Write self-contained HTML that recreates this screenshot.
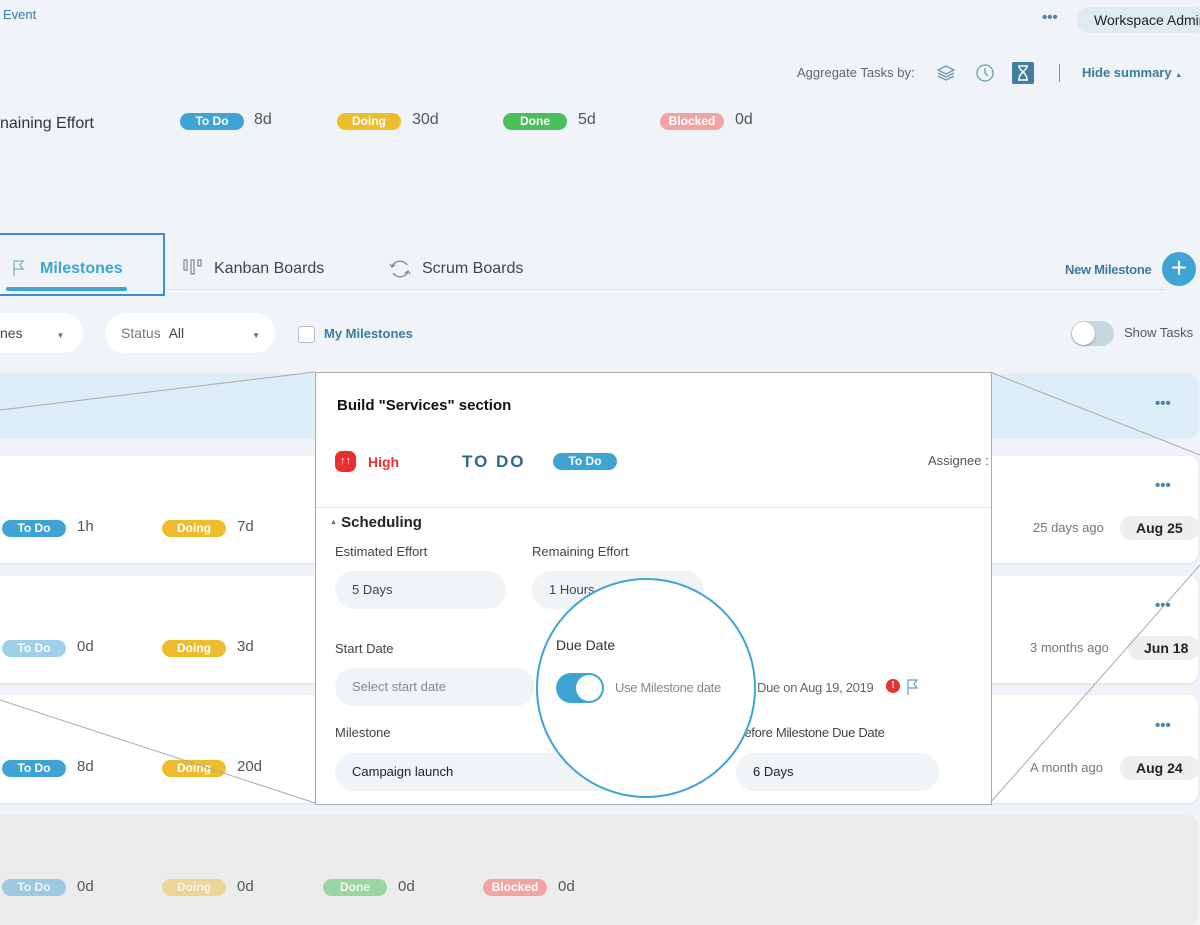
<!DOCTYPE html>
<html><head><meta charset="utf-8"><style>
*{margin:0;padding:0;box-sizing:border-box}
body{width:1200px;height:919px;overflow:hidden;background:#f0f4f8;font-family:"Liberation Sans",sans-serif;color:#333;position:relative}
.a{position:absolute;white-space:nowrap}
.b{position:absolute;height:17px;width:64px;border-radius:9px;color:#fff;font-weight:bold;font-size:12px;text-align:center;line-height:17px}
.todo{background:#3fa3d4}.doing{background:#eebd2e}.done{background:#4cbf5d}.blk{background:#f2a3a3}
.v{position:absolute;font-size:15px;color:#555}
.card{position:absolute;left:0;width:1198px;background:#fff;border-radius:0 10px 10px 0;box-shadow:0 1px 3px rgba(0,0,0,.08)}
.dots{position:absolute;color:#4a86a8;font-size:15px;font-weight:bold;letter-spacing:0px}
.pill{position:absolute;background:#eceeef;border-radius:14px;height:24px;font-weight:bold;font-size:14px;line-height:24px;padding-left:16px;color:#222}
.inp{position:absolute;background:#f1f4f6;border-radius:19px;height:38px;font-size:13px;line-height:38px;padding-left:17px;color:#444}
.lbl{position:absolute;font-size:13px;color:#444}
</style></head><body>
<div class="a" style="left:3px;top:7px;font-size:13px;color:#3a7ca0">Event</div>
<div class="a" style="left:1042px;top:9px;font-size:15px;color:#4a86a8;font-weight:bold">•••</div>
<div class="a" style="left:1077px;top:7px;width:130px;height:26px;background:#dfeaf1;border-radius:13px;font-size:14px;line-height:26px;padding-left:17px;color:#222">Workspace Admin</div>
<div class="a" style="left:797px;top:65px;font-size:13px;color:#666">Aggregate Tasks by:</div>
<svg class="a" style="left:936px;top:63px" width="20" height="20" viewBox="0 0 20 20" fill="none" stroke="#6a9cb0" stroke-width="1.3"><path d="M10 3 2 7l8 4 8-4z"/><path d="M2 10l8 4 8-4"/><path d="M2 13l8 4 8-4"/></svg>
<svg class="a" style="left:975px;top:63px" width="20" height="20" viewBox="0 0 20 20" fill="none" stroke="#6a9cb0" stroke-width="1.3"><circle cx="10" cy="10" r="8"/><path d="M10 5v5l3 3"/></svg>
<svg class="a" style="left:1012px;top:62px" width="22" height="22" viewBox="0 0 22 22"><rect width="22" height="22" rx="2" fill="#3f7e9c"/><path d="M6 4h10M6 18h10M7 4c0 5 8 6 8 14M15 4c0 5-8 6-8 14" stroke="#fff" stroke-width="1.5" fill="none"/></svg>
<div class="a" style="left:1059px;top:64px;width:1px;height:18px;background:#6a9cb0"></div>
<div class="a" style="left:1082px;top:65px;font-size:13px;color:#3a7ca0;font-weight:bold">Hide summary <span style="font-size:7px">▲</span></div>
<div class="a" style="left:0;top:115px;font-size:16px;color:#333">naining Effort</div>
<div class="b todo" style="left:180px;top:113px">To Do</div><div class="v" style="left:254px;top:111px;font-size:16px">8d</div>
<div class="b doing" style="left:337px;top:113px">Doing</div><div class="v" style="left:412px;top:111px;font-size:16px">30d</div>
<div class="b done" style="left:503px;top:113px">Done</div><div class="v" style="left:578px;top:111px;font-size:16px">5d</div>
<div class="b blk" style="left:660px;top:113px">Blocked</div><div class="v" style="left:735px;top:111px;font-size:16px">0d</div>

<div class="a" style="left:0;top:233px;width:165px;height:63px;border:2px solid #3b8fd6;border-left:none"></div>
<div class="a" style="left:6px;top:287px;width:121px;height:4px;border-radius:2px;background:#3fa3d4"></div>
<svg class="a" style="left:11px;top:259px" width="16" height="18" viewBox="0 0 16 18" fill="none" stroke="#8aa" stroke-width="1.3"><path d="M3 17V2h9l-3 4 3 4H3"/></svg>
<div class="a" style="left:40px;top:260px;font-size:16px;font-weight:bold;color:#3fa3d4">Milestones</div>
<svg class="a" style="left:183px;top:259px" width="20" height="16" viewBox="0 0 20 16" fill="none" stroke="#789" stroke-width="1.2"><rect x="1" y="1" width="3" height="10"/><rect x="8" y="1" width="3" height="14"/><rect x="15" y="1" width="3" height="6"/></svg>
<div class="a" style="left:214px;top:260px;font-size:16px;color:#444">Kanban Boards</div>
<svg class="a" style="left:388px;top:258px" width="24" height="22" viewBox="0 0 24 22" fill="none" stroke="#789" stroke-width="1.3"><path d="M4 9a8 7 0 0 1 15-2M20 13a8 7 0 0 1-15 2"/><path d="M2 6l2 3 3-2M22 16l-2-3-3 2"/></svg>
<div class="a" style="left:422px;top:260px;font-size:16px;color:#444">Scrum Boards</div>
<div class="a" style="left:165px;top:289px;width:1000px;height:1px;background:#dde3e8"></div>
<div class="a" style="left:1065px;top:262px;font-size:13px;font-weight:bold;color:#3a7ca0;letter-spacing:-0.3px">New Milestone</div>
<div class="a" style="left:1162px;top:252px;width:34px;height:34px;border-radius:50%;background:#3fa3d4;color:#fff;font-size:28px;line-height:32px;text-align:center">+</div>

<div class="a" style="left:0;top:313px;width:83px;height:40px;background:#fff;border-radius:0 20px 20px 0;font-size:14px;line-height:40px;color:#444">nes <span style="font-size:8px;margin-left:30px;color:#3a7ca0">▼</span></div>
<div class="a" style="left:105px;top:313px;width:170px;height:40px;background:#fff;border-radius:20px;font-size:14px;line-height:40px;padding-left:16px;color:#777">Status <span style="color:#444;margin-left:4px">All</span><span style="font-size:8px;margin-left:68px;color:#3a7ca0">▼</span></div>
<div class="a" style="left:298px;top:326px;width:17px;height:17px;border:1.5px solid #bbb;border-radius:3px;background:#fff"></div>
<div class="a" style="left:324px;top:326px;font-size:13px;font-weight:bold;color:#3a7ca0">My Milestones</div>
<div class="a" style="left:1071px;top:321px;width:43px;height:25px;border-radius:13px;background:#c8d6dd"></div>
<div class="a" style="left:1072px;top:322px;width:23px;height:23px;border-radius:50%;background:#fff;box-shadow:0 1px 2px rgba(0,0,0,.3)"></div>
<div class="a" style="left:1124px;top:325px;font-size:13px;color:#555">Show Tasks</div>

<div class="card" style="top:374px;height:63px;background:#dcedf5"></div>
<div class="dots" style="left:1155px;top:395px">•••</div>
<div class="card" style="top:456px;height:107px"></div>
<div class="dots" style="left:1155px;top:477px">•••</div>
<div class="b todo" style="left:2px;top:520px">To Do</div><div class="v" style="left:77px;top:518px">1h</div>
<div class="b doing" style="left:162px;top:520px">Doing</div><div class="v" style="left:237px;top:518px">7d</div>
<div class="a" style="left:1033px;top:520px;font-size:13px;color:#777">25 days ago</div>
<div class="pill" style="left:1120px;top:516px;width:80px">Aug 25</div>
<div class="card" style="top:576px;height:107px"></div>
<div class="dots" style="left:1155px;top:597px">•••</div>
<div class="b todo" style="left:2px;top:640px;opacity:.5">To Do</div><div class="v" style="left:77px;top:638px">0d</div>
<div class="b doing" style="left:162px;top:640px">Doing</div><div class="v" style="left:237px;top:638px">3d</div>
<div class="a" style="left:1030px;top:640px;font-size:13px;color:#777">3 months ago</div>
<div class="pill" style="left:1128px;top:636px;width:72px">Jun 18</div>
<div class="card" style="top:695px;height:108px"></div>
<div class="dots" style="left:1155px;top:717px">•••</div>
<div class="b todo" style="left:2px;top:760px">To Do</div><div class="v" style="left:77px;top:758px">8d</div>
<div class="b doing" style="left:162px;top:760px">Doing</div><div class="v" style="left:237px;top:758px">20d</div>
<div class="a" style="left:1030px;top:760px;font-size:13px;color:#777">A month ago</div>
<div class="pill" style="left:1120px;top:756px;width:80px">Aug 24</div>
<div class="card" style="top:815px;height:110px;background:#ececec;box-shadow:none"></div>
<div class="b todo" style="left:2px;top:879px;opacity:.45">To Do</div><div class="v" style="left:77px;top:878px">0d</div>
<div class="b doing" style="left:162px;top:879px;opacity:.45">Doing</div><div class="v" style="left:237px;top:878px">0d</div>
<div class="b done" style="left:323px;top:879px;opacity:.5">Done</div><div class="v" style="left:398px;top:878px">0d</div>
<div class="b blk" style="left:483px;top:879px">Blocked</div><div class="v" style="left:558px;top:878px">0d</div>

<svg class="a" style="left:0;top:0" width="1200" height="919"><g stroke="#aaa" stroke-width="1"><line x1="0" y1="410" x2="315" y2="372"/><line x1="990" y1="372" x2="1200" y2="455"/><line x1="0" y1="700" x2="315" y2="803"/><line x1="990" y1="803" x2="1200" y2="565"/></g></svg>

<div class="a" style="left:315px;top:372px;width:677px;height:433px;background:#fff;border:1.5px solid #aaa;overflow:hidden">
 <div class="a" style="left:21px;top:24px;font-size:15px;font-weight:bold;color:#111">Build "Services" section</div>
 <div class="a" style="left:19px;top:78px;width:21px;height:21px;border-radius:7px;background:#e8302e;color:#fff;font-size:11px;font-weight:bold;text-align:center;line-height:21px">↑↑</div>
 <div class="a" style="left:52px;top:81px;font-size:14px;font-weight:bold;color:#e8302e">High</div>
 <div class="a" style="left:146px;top:79px;font-size:17px;font-weight:bold;color:#2b6b8c;letter-spacing:2px">TO DO</div>
 <div class="b todo" style="left:237px;top:80px">To Do</div>
 <div class="a" style="left:612px;top:80px;font-size:13px;color:#555">Assignee :</div>
 <div class="a" style="left:0;top:134px;width:677px;height:1px;background:#e3e6e8"></div>
 <div class="a" style="left:14px;top:141px;font-size:15px;font-weight:bold;color:#222"><span style="font-size:7px;color:#3a7ca0;vertical-align:3px">▲</span> Scheduling</div>
 <div class="lbl" style="left:19px;top:171px">Estimated Effort</div>
 <div class="lbl" style="left:216px;top:171px">Remaining Effort</div>
 <div class="inp" style="left:19px;top:198px;width:171px">5 Days</div>
 <div class="inp" style="left:216px;top:198px;width:172px">1 Hours</div>
 <div class="lbl" style="left:19px;top:268px">Start Date</div>
 <div class="inp" style="left:19px;top:295px;width:200px;color:#888">Select start date</div>
 <div class="lbl" style="left:19px;top:352px">Milestone</div>
 <div class="inp" style="left:19px;top:380px;width:285px;color:#222">Campaign launch</div>
 <div class="a" style="left:373px;top:402px;font-size:9px;color:#555">▼</div>
 <div class="a" style="left:441px;top:307px;font-size:13px;color:#666;letter-spacing:-0.3px">Due on Aug 19, 2019</div>
 <div class="a" style="left:570px;top:306px;width:14px;height:14px;border-radius:50%;background:#e8302e;color:#fff;font-size:10px;font-weight:bold;text-align:center;line-height:14px">!</div>
 <svg class="a" style="left:590px;top:305px" width="14" height="18" viewBox="0 0 14 18" fill="none" stroke="#6a9cb0" stroke-width="1.2"><path d="M2 17V2h9l-3 4 3 4H2"/></svg>
 <div class="lbl" style="left:420px;top:352px;letter-spacing:-0.3px">Before Milestone Due Date</div>
 <div class="inp" style="left:420px;top:380px;width:203px;color:#222">6 Days</div>
 <div class="a" style="left:220px;top:205px;width:220px;height:220px;border-radius:50%;background:#fff;border:2.5px solid #3fa3d4"></div>
 <div class="a" style="left:240px;top:264px;font-size:14px;color:#333">Due Date</div>
 <div class="a" style="left:240px;top:300px;width:48px;height:30px;border-radius:15px;background:#3fa3d4"></div>
 <div class="a" style="left:260px;top:302px;width:26px;height:26px;border-radius:50%;background:#fff"></div>
 <div class="a" style="left:299px;top:307px;font-size:13px;color:#888;letter-spacing:-0.3px">Use Milestone date</div>
</div>
</body></html>
